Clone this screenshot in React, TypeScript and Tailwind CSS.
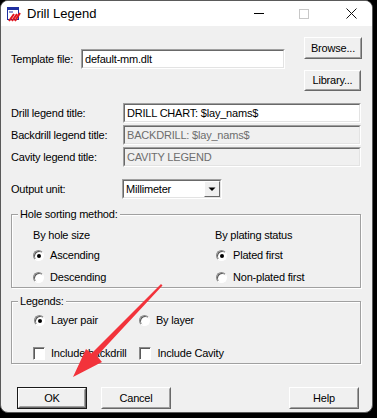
import React from "react";

const sunken =
  "border border-t-[#a0a0a0] border-l-[#a0a0a0] border-b-white border-r-white";
const sunkenInner =
  "h-full border border-t-[#696969] border-l-[#696969] border-b-[#e3e3e3] border-r-[#e3e3e3]";

const TextBox = ({
  value,
  width,
  disabled,
}: {
  value: string;
  width: string;
  disabled?: boolean;
}) => (
  <div className={`${sunken} ${width} h-[20px]`}>
    <div
      className={`${sunkenInner} flex items-center pl-[2px] ${
        disabled ? "bg-[#f0f0f0] text-[#6d6d6d]" : "bg-white text-black"
      }`}
    >
      {value}
    </div>
  </div>
);

const Button = ({
  label,
  width,
  height = "h-[22px]",
  isDefault,
}: {
  label: string;
  width: string;
  height?: string;
  isDefault?: boolean;
}) => (
  <div
    className={`${width} ${height} ${
      isDefault ? "border border-[#1a1a1a]" : ""
    }`}
  >
    <div className="h-full border border-t-white border-l-white border-b-[#696969] border-r-[#696969]">
      <div className="flex h-full items-center justify-center border border-transparent border-b-[#a0a0a0] border-r-[#a0a0a0] bg-[#f0f0f0]">
        {label}
      </div>
    </div>
  </div>
);

const Radio = ({ checked, label }: { checked?: boolean; label: string }) => (
  <div className="flex h-[14px] items-center gap-[6px]">
    <div className="relative h-[11px] w-[11px] rounded-full border border-t-[#8a8a8a] border-l-[#8a8a8a] border-b-white border-r-white bg-white shadow-[inset_1px_1px_0_#5a5a5a]">
      {checked && (
        <div className="absolute left-[3px] top-[3px] h-[4px] w-[4px] rounded-full bg-black" />
      )}
    </div>
    <span>{label}</span>
  </div>
);

const Check = ({ label }: { label: string }) => (
  <div className="flex h-[14px] items-center gap-[6px]">
    <div className="h-[13px] w-[12px] border border-t-[#8a8a8a] border-l-[#8a8a8a] border-b-white border-r-white bg-white shadow-[inset_1px_1px_0_#5a5a5a]" />
    <span>{label}</span>
  </div>
);

const GroupBox = ({
  title,
  height,
  children,
}: {
  title: string;
  height: string;
  children: React.ReactNode;
}) => (
  <div
    className={`relative ml-[10px] w-[350px] ${height} border border-[#a0a0a0] shadow-[1px_1px_0_white,inset_1px_1px_0_white]`}
  >
    <span className="absolute -top-[8px] left-[6px] bg-[#f0f0f0] px-[2px] leading-[14px]">
      {title}
    </span>
    {children}
  </div>
);

const AppIcon = () => (
  <svg width="14" height="15" viewBox="0 0 14 15">
    <rect x="0.5" y="0.5" width="11" height="12" fill="white" stroke="#1f2fa0" />
    <rect x="1" y="1" width="10" height="2" fill="#1f2fa0" />
    <rect x="2" y="4.5" width="4" height="1" fill="#1f2fa0" />
    <path d="M2 14 L7 7 M5 14 L10 7 M8 14 L13 6" stroke="#e0141e" strokeWidth="2" />
  </svg>
);

export default function App() {
  return (
    <div
      className="h-[418px] w-[377px] overflow-hidden bg-black text-[11px] text-black"
      style={{ fontFamily: '"Liberation Sans", Arial, sans-serif' }}
    >
      <div className="relative h-[413px] w-[373px] overflow-hidden rounded-lg border border-[#5a5a5a] bg-[#f0f0f0] tracking-[-0.2px]">
        {/* title bar */}
        <div className="flex h-[25px] items-center bg-white">
          <div className="ml-[6px] mt-[1px]">
            <AppIcon />
          </div>
          <span className="ml-[6px] text-[13px] tracking-normal">Drill Legend</span>
          <div className="ml-auto flex items-center">
            <div className="mr-[35px] h-px w-[10px] bg-black" />
            <div className="mr-[37px] h-[10px] w-[10px] border border-[#c8c8c8]" />
            <svg width="11" height="11" viewBox="0 0 11 11" className="mr-[15px]">
              <path d="M0.5 0.5 L10.5 10.5 M10.5 0.5 L0.5 10.5" stroke="#111" strokeWidth="1" />
            </svg>
          </div>
        </div>

        {/* body */}
        <div className="flex flex-col">
          <div className="flex pt-[11px]">
            <div className="ml-[10px] mt-[12px] flex h-[20px] items-center">
              <span className="w-[70px]">Template file:</span>
              <TextBox value="default-mm.dlt" width="w-[204px]" />
            </div>
            <div className="ml-[19px] flex flex-col gap-[11px]">
              <Button label="Browse..." width="w-[58px]" />
              <Button label="Library..." width="w-[57px]" height="h-[21px]" />
            </div>
          </div>

          <div className="mt-[12px] flex flex-col gap-[2px] pl-[10px]">
            <div className="flex items-center">
              <span className="w-[112px]">Drill legend title:</span>
              <TextBox value="DRILL CHART: $lay_nams$" width="w-[238px]" />
            </div>
            <div className="flex items-center">
              <span className="w-[112px]">Backdrill legend title:</span>
              <TextBox value="BACKDRILL: $lay_nams$" width="w-[238px]" disabled />
            </div>
            <div className="flex items-center">
              <span className="w-[112px]">Cavity legend title:</span>
              <TextBox value="CAVITY LEGEND" width="w-[238px]" disabled />
            </div>
          </div>

          <div className="mt-[12px] flex items-center pl-[10px]">
            <span className="w-[111px]">Output unit:</span>
            <div className={`${sunken} h-[20px] w-[100px]`}>
              <div className={`${sunkenInner} flex items-center bg-white pl-[2px]`}>
                <span className="flex-1">Millimeter</span>
                <div className="h-[16px] w-[16px] border border-t-white border-l-white border-b-[#696969] border-r-[#696969] bg-[#f0f0f0]">
                  <svg width="14" height="14" viewBox="0 0 14 14">
                    <path d="M3.5 5.5 H10.5 L7 9 Z" fill="black" />
                  </svg>
                </div>
              </div>
            </div>
          </div>

          <div className="mt-[15px]">
            <GroupBox title="Hole sorting method:" height="h-[74px]">
              <div className="flex pt-[13px]">
                <div className="ml-[21px] flex w-[182px] flex-col">
                  <span className="h-[14px] leading-[14px]">By hole size</span>
                  <div className="mt-[6px]">
                    <Radio checked label="Ascending" />
                  </div>
                  <div className="mt-[8px]">
                    <Radio label="Descending" />
                  </div>
                </div>
                <div className="flex flex-col">
                  <span className="h-[14px] leading-[14px]">By plating status</span>
                  <div className="ml-[1px] mt-[6px]">
                    <Radio checked label="Plated first" />
                  </div>
                  <div className="ml-[1px] mt-[8px]">
                    <Radio label="Non-plated first" />
                  </div>
                </div>
              </div>
            </GroupBox>
          </div>

          <div className="mt-[13px]">
            <GroupBox title="Legends:" height="h-[63px]">
              <div className="ml-[22px] mt-[11px] flex gap-[41px]">
                <Radio checked label="Layer pair" />
                <Radio label="By layer" />
              </div>
              <div className="ml-[21px] mt-[19px] flex gap-[13px]">
                <Check label="Include backdrill" />
                <Check label="Include Cavity" />
              </div>
            </GroupBox>
          </div>

          <div className="mt-[23px] flex pl-[16px]">
            <Button label="OK" width="w-[70px]" isDefault />
            <div className="ml-[14px]">
              <Button label="Cancel" width="w-[70px]" />
            </div>
            <div className="ml-auto mr-[13px]">
              <Button label="Help" width="w-[70px]" />
            </div>
          </div>
        </div>

        {/* annotation arrow */}
        <svg
          className="pointer-events-none absolute left-0 top-0"
          width="373"
          height="413"
          viewBox="0 0 373 413"
        >
          <path
            d="M160 283 L161.5 284.5 L96 355 L101 361 L72 376 L85 348 L90.5 352.5 Z"
            fill="#f2333b"
          />
        </svg>
      </div>
    </div>
  );
}
